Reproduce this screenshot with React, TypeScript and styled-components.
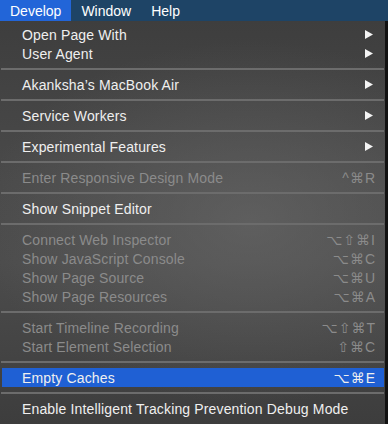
import styled, { createGlobalStyle } from "styled-components";

const GlobalStyle = createGlobalStyle`
  html, body {
    margin: 0;
    padding: 0;
    background: #141414;
  }
  * {
    box-sizing: border-box;
  }
`;

type Item =
  | { kind: "item"; label: string; shortcut?: string; submenu?: boolean; disabled?: boolean; active?: boolean }
  | { kind: "sep" };

const items: Item[] = [
  { kind: "item", label: "Open Page With", submenu: true },
  { kind: "item", label: "User Agent", submenu: true },
  { kind: "sep" },
  { kind: "item", label: "Akanksha’s MacBook Air", submenu: true },
  { kind: "sep" },
  { kind: "item", label: "Service Workers", submenu: true },
  { kind: "sep" },
  { kind: "item", label: "Experimental Features", submenu: true },
  { kind: "sep" },
  { kind: "item", label: "Enter Responsive Design Mode", shortcut: "^⌘R", disabled: true },
  { kind: "sep" },
  { kind: "item", label: "Show Snippet Editor" },
  { kind: "sep" },
  { kind: "item", label: "Connect Web Inspector", shortcut: "⌥⇧⌘I", disabled: true },
  { kind: "item", label: "Show JavaScript Console", shortcut: "⌥⌘C", disabled: true },
  { kind: "item", label: "Show Page Source", shortcut: "⌥⌘U", disabled: true },
  { kind: "item", label: "Show Page Resources", shortcut: "⌥⌘A", disabled: true },
  { kind: "sep" },
  { kind: "item", label: "Start Timeline Recording", shortcut: "⌥⇧⌘T", disabled: true },
  { kind: "item", label: "Start Element Selection", shortcut: "⇧⌘C", disabled: true },
  { kind: "sep" },
  { kind: "item", label: "Empty Caches", shortcut: "⌥⌘E", active: true },
  { kind: "sep" },
  { kind: "item", label: "Enable Intelligent Tracking Prevention Debug Mode" },
];

const App = () => {
  return (
    <Screen>
      <GlobalStyle />
      <MenuBar>
        <BarItem $open>Develop</BarItem>
        <BarItem>Window</BarItem>
        <BarItem>Help</BarItem>
      </MenuBar>
      <Panel>
        {items.map((it, i) =>
          it.kind === "sep" ? (
            <Separator key={i} />
          ) : (
            <Row key={i} $disabled={it.disabled} $active={it.active}>
              <Label>{it.label}</Label>
              {it.shortcut && <Shortcut>{it.shortcut}</Shortcut>}
              {it.submenu && (
                <Arrow viewBox="0 0 8 9">
                  <path d="M0 0 L8 4.5 L0 9 Z" fill="#f4f4f4" />
                </Arrow>
              )}
            </Row>
          )
        )}
      </Panel>
    </Screen>
  );
};

const Screen = styled.div`
  width: 388px;
  height: 424px;
  overflow: hidden;
  background: #121212;
  font-family: "Liberation Sans", "DejaVu Sans", sans-serif;
  font-size: 14px;
  color: #ececec;
`;

const MenuBar = styled.div`
  height: 21px;
  display: flex;
  align-items: stretch;
  background: #1e4466;
`;

const BarItem = styled.div<{ $open?: boolean }>`
  display: flex;
  align-items: center;
  padding: 0 10px;
  color: #ffffff;
  background: ${(p) => (p.$open ? "#2265d8" : "transparent")};
`;

const Panel = styled.div`
  width: 385px;
  height: 403px;
  padding-top: 4px;
  display: flex;
  flex-direction: column;
  background:
    radial-gradient(ellipse 70% 45% at 65% 50%, rgba(110, 110, 110, 0.55), rgba(110, 110, 110, 0) 100%),
    linear-gradient(180deg, #3e3e3e 0%, #4a4a4a 40%, #4c4c4c 60%, #3d3d3d 100%);
`;

const Row = styled.div<{ $disabled?: boolean; $active?: boolean }>`
  height: 19px;
  flex-shrink: 0;
  margin: 0 1px 0 2px;
  padding: 0 8px 0 20px;
  display: flex;
  align-items: center;
  color: ${(p) => (p.$disabled ? "#8b8b8b" : "#efefef")};
  background: ${(p) => (p.$active ? "#1f60d4" : "transparent")};
`;

const Label = styled.span`
  flex: 1;
  white-space: nowrap;
  letter-spacing: 0.15px;
`;

const Shortcut = styled.span`
  font-family: "Liberation Sans", "DejaVu Sans", sans-serif;
  letter-spacing: 1px;
  white-space: nowrap;
`;

const Arrow = styled.svg`
  width: 8px;
  height: 9px;
  margin-right: 3px;
`;

const Separator = styled.div`
  height: 12px;
  flex-shrink: 0;
  display: flex;
  align-items: center;
  padding: 0 1px;

  &::before {
    content: "";
    flex: 1;
    height: 2px;
    background: #6c6c6c;
  }
`;

export default App;
